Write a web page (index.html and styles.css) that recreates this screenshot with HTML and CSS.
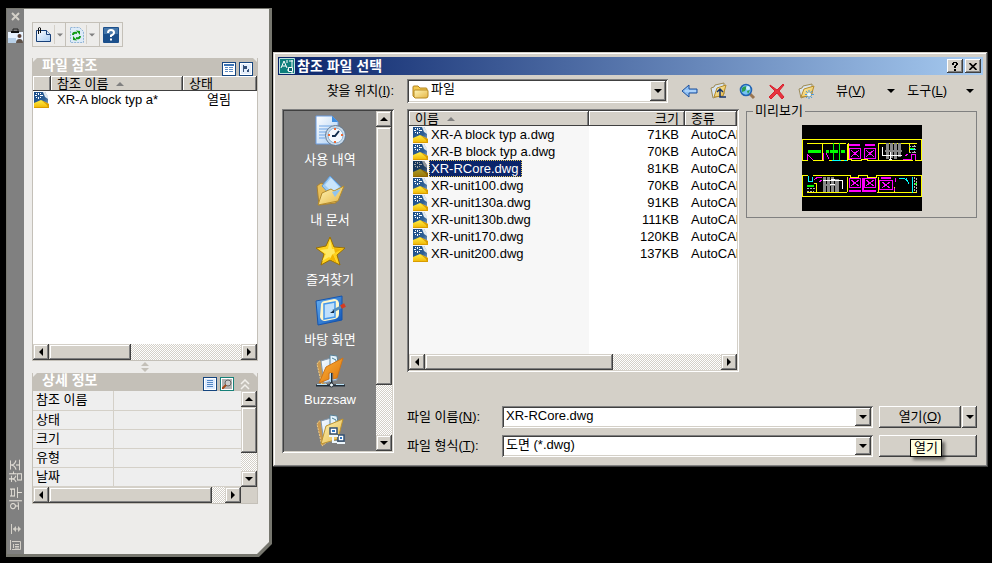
FILE: index.html
```html
<!DOCTYPE html>
<html lang="ko">
<head>
<meta charset="utf-8">
<title>외부 참조</title>
<link rel="stylesheet" href="styles.css">
</head>
<body>
<svg class="sprite" aria-hidden="true">
  <defs>
    <linearGradient id="navy" x1="0" y1="0" x2="1" y2="1"><stop offset="0" stop-color="#174a86"/><stop offset=".6" stop-color="#2f6096"/><stop offset="1" stop-color="#9fb4c8"/></linearGradient>
    <linearGradient id="gold" x1="0" y1="0" x2="0" y2="1"><stop offset="0" stop-color="#fff04a"/><stop offset="1" stop-color="#f0b400"/></linearGradient>
    <linearGradient id="paper" x1="0" y1="0" x2="1" y2="1"><stop offset="0" stop-color="#ffffff"/><stop offset="1" stop-color="#a9cdf3"/></linearGradient>
    <linearGradient id="folder" x1="0" y1="0" x2="1" y2="1"><stop offset="0" stop-color="#fff6b8"/><stop offset="1" stop-color="#e5b545"/></linearGradient>
    <linearGradient id="orange" x1="0" y1="0" x2="1" y2="1"><stop offset="0" stop-color="#ffb43c"/><stop offset="1" stop-color="#dc7208"/></linearGradient>
    <linearGradient id="blue" x1="0" y1="0" x2="1" y2="1"><stop offset="0" stop-color="#6ab4f5"/><stop offset="1" stop-color="#0b51b5"/></linearGradient>
  </defs>
  <symbol id="dwg" viewBox="0 0 16 16">
    <path d="M0 0h11l3 5v11H0z" fill="url(#navy)"/>
    <path d="M9 0h2l3 4v3l-3-2z" fill="#dfe7ee"/>
    <path d="M4 1h1v2H4zM4 5h1v2H4zM1 3h2v1H1zM6 3h3v1H6zM2 1h1v1H2zM6 1h1v1H6zM2 5h1v1H2zM6 5h1v1H6z" fill="#fff"/>
    <path d="M0 11l7-3 8 4v4H0z" fill="url(#gold)"/>
    <path d="M7 8l8 4v4h-1l-1-3z" fill="#d99c00"/>
    <path d="M0 15h15v1H0z" fill="#d99c00"/>
  </symbol>
  <symbol id="up" viewBox="0 0 8 4"><path d="M4 0l4 4H0z"/></symbol>
  <symbol id="down" viewBox="0 0 8 4"><path d="M0 0h8L4 4z"/></symbol>
  <symbol id="left" viewBox="0 0 4 8"><path d="M4 0v8L0 4z"/></symbol>
  <symbol id="right" viewBox="0 0 4 8"><path d="M0 0v8l4-4z"/></symbol>
  <symbol id="files-folder" viewBox="0 0 32 34">
    <path d="M3 10l2-3 5 1 2 21-4 3z" fill="#c9974d" stroke="#f0cc85" stroke-dasharray="2 1"/>
    <path d="M7 7l10-3 5 4 1 18-13 3z" fill="url(#paper)" stroke="#8197ad"/>
    <path d="M16 1l7 1 1 7-8 5z" fill="#e5f2fc" stroke="#5a8297"/>
    <path d="M18 4l4 2v5" fill="none" stroke="#4a8193"/>
  </symbol>
</svg>

<main class="desktop">
  <aside class="palette" aria-label="외부 참조">
    <div class="palette-inner">
      <div class="strip">
        <button class="plain" aria-label="닫기"><svg width="10" height="10" viewBox="0 0 10 10"><path d="M1 1l7 7M8 1L1 8" stroke="#d4d0c8" stroke-width="2"/></svg></button>
        <svg class="strip-pic" width="16" height="16" viewBox="0 0 16 16"><path d="M0 4h15v11H0z" fill="#e9f3ff"/><path d="M0 10h8v5H0z" fill="#b8d0e8"/><path d="M5 4V1h5v3" fill="none" stroke="#222"/><path d="M3 3h8v2H3z" fill="#111"/><circle cx="11.500" cy="8" r="2" fill="#5b3f35"/><path d="M8 15q0-4 3.500-4t3.500 4z" fill="#5e5148"/></svg>
        <span class="strip-title">외부 참조</span>
        <button class="plain" aria-label="자동 숨기기"><svg width="11" height="10" viewBox="0 0 11 10"><path d="M1.500 0v10M3 5h7" stroke="#d4d0c8"/><path d="M6 2v6L3 5zM8 2l3 3-3 3z" fill="#d4d0c8"/></svg></button>
        <button class="plain" aria-label="특성"><svg width="11" height="10" viewBox="0 0 11 10"><path d="M.5 0v10M2 1.500h8.500v8H2M3.500 4v4M5 4.500h4M5 6.500h4M5 8h4" fill="none" stroke="#d4d0c8"/></svg></button>
      </div>
      <div class="palette-content">
        <div class="tools">
          <button class="tool split" aria-label="DWG 부착"><svg width="17" height="16" viewBox="0 0 17 16"><path d="M1.500 3.500h10l4 4v7h-14z" fill="url(#paper)" stroke="#173f78"/><path d="M11.500 3.500v4h4" fill="#dcebfa" stroke="#173f78"/><path d="M3.500 7V1q1-1 2 0v5" fill="none" stroke="#111"/></svg><i></i><svg class="grey" width="6" height="4"><use href="#down"/></svg></button>
          <button class="tool split" aria-label="갱신"><svg width="14" height="16" viewBox="0 0 14 16"><path d="M.5.500h9l4 4v11H.5z" fill="#ddebf8" stroke="#91b5d8" stroke-dasharray="2 1"/><path d="M3 8q0-3 4-2M10 9q0 3-4 2" fill="none" stroke="#119b16" stroke-width="2"/><path d="M6 3.500L10 4v4zM7 13.500L3 13V9z" fill="#119b16"/></svg><i></i><svg class="grey" width="6" height="4"><use href="#down"/></svg></button>
          <button class="tool" aria-label="도움말"><svg width="16" height="16" viewBox="0 0 16 16"><rect width="16" height="16" rx="1" fill="#1b4f8b"/><path d="M1 1h14v6H1z" fill="#4677aa"/><path d="M5 6q0-3 3-3t3 2.500q0 2-3 3V10M8 11.500v2" fill="none" stroke="#fff" stroke-width="2"/></svg></button>
        </div>

        <section class="panel refs">
          <header class="panel-head"><h2>파일 참조</h2>
            <button class="view" aria-label="리스트 뷰"><svg width="10" height="10" viewBox="0 0 10 10" shape-rendering="crispEdges"><path d="M0 0h10v10H0z" fill="#fff"/><path d="M0 0h10v2H0z" fill="#3c73b4"/><path d="M1 3h3v1H1zM5 3h4v1H5zM1 5h3v1H1zM5 5h4v1H5zM1 7h3v1H1zM5 7h4v1H5z" fill="#5b8ac2"/></svg></button>
            <button class="view" aria-label="트리 뷰"><svg width="10" height="10" viewBox="0 0 10 10" shape-rendering="crispEdges"><path d="M0 0h10v10H0z" fill="#e4eefb"/><path d="M2 1h1v7H2zM3 2h3v3H3zM6 6h2v2H6zM7 5h1v1H7z" fill="#345078"/></svg></button>
          </header>
          <div class="ref-list">
            <table>
              <colgroup><col class="c-icon"><col class="c-ref"><col></colgroup>
              <thead><tr><th></th><th>참조 이름 <svg class="sort" width="8" height="4"><use href="#up"/></svg></th><th>상태</th></tr></thead>
              <tbody><tr><td><svg width="16" height="16"><use href="#dwg"/></svg></td><td>XR-A block typ a*</td><td class="state">열림</td></tr></tbody>
            </table>
          </div>
          <div class="hbar"><button aria-label="왼쪽"><svg width="4" height="8"><use href="#left"/></svg></button><span class="thumb t-refs"></span><span class="track"></span><button aria-label="오른쪽"><svg width="4" height="8"><use href="#right"/></svg></button></div>
        </section>

        <div class="splitter"><svg width="8" height="10" viewBox="0 0 8 10"><path d="M4 0l4 4H0zM0 6h8l-4 4z" fill="#c4c0b8"/></svg></div>

        <section class="panel">
          <header class="panel-head"><h2>상세 정보</h2>
            <button class="view" aria-label="상세 정보"><svg width="10" height="10" viewBox="0 0 10 10" shape-rendering="crispEdges"><path d="M0 0h10v10H0z" fill="#dceaff"/><path d="M2 1h6v1H2zM2 3h6v1H2zM2 5h6v1H2zM2 7h6v1H2z" fill="#5487c4"/></svg></button>
            <button class="view teal" aria-label="미리보기"><svg width="10" height="10" viewBox="0 0 10 10"><path d="M0 0h10v10H0z" fill="#b4b4b4"/><circle cx="6" cy="4" r="3" fill="#ccc" stroke="#666"/><path d="M4 6L0 10" stroke="#a34b17" stroke-width="2"/></svg></button>
            <button class="plain chevrons" aria-label="접기"><svg width="10" height="11" viewBox="0 0 10 11"><path d="M1 5l4-4 4 4M1 10l4-4 4 4" fill="none" stroke="#f2f0ec" stroke-width="1.500"/></svg></button>
          </header>
          <div class="detail">
            <table>
              <colgroup><col class="c-key"><col></colgroup>
              <tbody>
                <tr><th>참조 이름</th><td></td></tr>
                <tr><th>상태</th><td></td></tr>
                <tr><th>크기</th><td></td></tr>
                <tr><th>유형</th><td></td></tr>
                <tr><th>날짜</th><td></td></tr>
              </tbody>
            </table>
            <div class="vbar"><button aria-label="위"><svg width="8" height="4"><use href="#up"/></svg></button><span class="thumb t-detail"></span><span class="track"></span><button aria-label="아래"><svg width="8" height="4"><use href="#down"/></svg></button></div>
          </div>
          <div class="hbar with-corner"><button aria-label="왼쪽"><svg width="4" height="8"><use href="#left"/></svg></button><span class="thumb t-keys"></span><span class="track"></span><button aria-label="오른쪽"><svg width="4" height="8"><use href="#right"/></svg></button></div>
        </section>
      </div>
    </div>
  </aside>

  <section class="dialog" role="dialog" aria-labelledby="dlg-title">
    <header class="titlebar">
      <svg width="16" height="16" viewBox="0 0 16 16"><rect width="16" height="16" fill="#0d7f7c"/><path d="M.5.500h15v15H.5z" fill="none" stroke="#bfe3e0"/><path d="M2 10L5 3l3 7M3 8h4M8 2v3M10 3h4M13 2v7M8 12h3M13 14v2" fill="none" stroke="#fff"/><path d="M9.500 9.500h4v4h-4z" fill="#0d5f6c" stroke="#fff"/></svg>
      <h1 id="dlg-title">참조 파일 선택</h1>
      <button class="push cap" aria-label="도움말"><svg width="8" height="9" viewBox="0 0 8 9" shape-rendering="crispEdges"><path d="M2 0h4v1H2zM1 1h2v2H1zM5 1h2v2H5zM4 3h2v1H4zM3 4h2v2H3zM3 7h2v2H3z"/></svg></button>
      <button class="push cap" aria-label="닫기"><svg width="8" height="7" viewBox="0 0 8 7"><path d="M.5 0l7 7M7.500 0l-7 7" stroke="#000" stroke-width="1.600"/></svg></button>
    </header>

    <div class="dialog-body">
      <label class="look-label" for="look">찾을 위치(<u>I</u>):</label>
      <div class="look-row">
        <div class="combo look">
          <svg width="17" height="15" viewBox="0 0 17 15"><path d="M1 12V3q0-1 1-1h4l2 2h6q1 0 1 1v8H2z" fill="#f4c94e" stroke="#b08320"/><path d="M2 13V7q0-1 1-1h12q1 0 1 1v5q0 2-2 2H3z" fill="url(#folder)" stroke="#b88a22"/></svg>
          <select id="look"><option>파일</option></select>
          <span class="push drop"><svg width="8" height="4"><use href="#down"/></svg></span>
        </div>
        <nav class="nav-tools">
          <button class="plain" aria-label="뒤로"><svg width="17" height="16" viewBox="0 0 17 16"><path d="M1 8l7-6v4h8v4H8v4z" fill="#8fc0f3" stroke="#1b4f9c"/><path d="M4 8h11" stroke="#c7e2ff"/></svg></button>
          <button class="plain" aria-label="한 수준 위로"><svg width="17" height="18" viewBox="0 0 17 18"><path d="M1 6l3-1 1-2 9-2v11L3 16z" fill="#d7e4f2" stroke="#9d8b56"/><path d="M4 15L7 6l9-3-3 11z" fill="url(#folder)" stroke="#b58b2b"/><path d="M7 10l3-3 3 3M10 8v7h6" fill="none" stroke="#15336b" stroke-width="1.500"/></svg></button>
          <button class="plain" aria-label="웹 검색"><svg width="17" height="17" viewBox="0 0 17 17"><path d="M10 10l5 5" stroke="#9a7652" stroke-width="3"/><circle cx="7" cy="7" r="5.500" fill="#75c4f4" stroke="#2364b3" stroke-width="1.600"/><path d="M3 5q3-3 5-1l-2 4-3 1zM8 8l3-1-2 4z" fill="#2c9d50"/><circle cx="9" cy="5" r="2" fill="#c9efff"/></svg></button>
          <button class="plain" aria-label="삭제"><svg width="18" height="17" viewBox="0 0 18 17"><path d="M2 2L9 7l6-6 1 1-5 6 5 6-2 2-5-6-6 6-2-2 6-6-5-5z" fill="#e7343f" stroke="#d8222f"/></svg></button>
          <button class="plain" aria-label="새 폴더"><svg width="17" height="17" viewBox="0 0 17 17"><path d="M1 6l3-1 1-2 9-2v10L3 15z" fill="#dbe5ef" stroke="#9d8b56"/><path d="M3 14L6 6l10-3-3 10z" fill="url(#folder)" stroke="#b58b2b"/><path d="M11 7v9M7 11.500h9M8 8l6 7M14 8l-6 7" stroke="#4e9bdd"/><circle cx="11" cy="11.500" r="2" fill="#e9f8ff"/></svg></button>
          <button class="plain menu m-view">뷰(<u>V</u>)<svg width="8" height="4"><use href="#down"/></svg></button>
          <button class="plain menu m-tool">도구(<u>L</u>)<svg width="8" height="4"><use href="#down"/></svg></button>
        </nav>
      </div>

      <div class="places">
        <ul>
          <li><a href="#"><svg width="32" height="34" viewBox="0 0 32 34"><path d="M2 2h16l6 6v22H2z" fill="url(#paper)" stroke="#6b9ce0"/><path d="M18 2v6h6z" fill="#3d8de0"/><path d="M5 12h13M5 15h10M5 18h8M5 21h7M5 24h6" stroke="#6fa5e5"/><circle cx="21.500" cy="21.500" r="10" fill="#cbdcec" stroke="#62788f"/><circle cx="21.500" cy="21.500" r="7.500" fill="#f2f9ff" stroke="#8eb4d3"/><path d="M25 17l-4 5h-3" fill="none" stroke="#112f50" stroke-width="2"/><path d="M21 14v2M21 27v2M14 21h2M27 21h2" stroke="#ed6a36" stroke-width="2"/></svg>사용 내역</a></li>
          <li><a href="#"><svg width="32" height="34" viewBox="0 0 32 34"><path d="M3 12l4-3 7 3 8-1v18L5 31z" fill="#e8bf58" stroke="#a88032"/><path d="M8 12l8-10 12 12-9 10z" fill="#9dcaf2" stroke="#5d9bda"/><path d="M11 11l6-7 8 9-6 6z" fill="#c9e5fb"/><path d="M4 31l4-12 9-4 3 2 10-5-6 15z" fill="url(#folder)" stroke="#b38b2e"/><path d="M18 18l9-3-6 8z" fill="#8fc4f0"/></svg>내 문서</a></li>
          <li><a href="#"><svg width="32" height="34" viewBox="0 0 32 34"><path d="M16 3l4 10 11 1-8 7 3 10-10-5-9 5 3-11-8-6 10-2z" fill="#ffd21e" stroke="#9c7000"/><path d="M16 5l2 10 10 0-9 5 4 8-8-5-7 4 4-7-6-4 8-1z" fill="#ffe963"/><path d="M19 20l4 9-7-4 2-4zM20 14l9 1-8 4z" fill="#f3b400"/></svg>즐겨찾기</a></li>
          <li><a href="#"><svg width="32" height="34" viewBox="0 0 32 34"><path d="M2 7l26-5v24L4 31z" fill="url(#blue)" stroke="#1555ae"/><path d="M7 10q1-3 4-3l9-2q4 0 5 4v11q0 4-4 5l-10 2q-4 0-5-4z" fill="#fff7cb"/><path d="M10 10l11-2v15l-11 2z" fill="#bfe0fc" stroke="#4598eb" stroke-width="1.500"/><path d="M19 17l8-4" stroke="#568fbd" stroke-width="3"/><path d="M27 13l4-2" stroke="#d53b21" stroke-width="4"/><path d="M16 19l4-3v3z" fill="#112b4a"/></svg>바탕 화면</a></li>
          <li><a href="#"><svg width="32" height="34" viewBox="0 0 32 34"><use href="#files-folder" width="32" height="34"/><path d="M5 29l7-16 17-9-6 20-4 1v-6h-4v6z" fill="url(#orange)" stroke="#ce7519"/><path d="M17.500 19v11M2 31.500h29" stroke="#202c38" stroke-width="2"/><path d="M16.500 19v9M3 30.500h10M22 30.500h8" stroke="#b8e1f6"/><circle cx="17.500" cy="31" r="2" fill="#eef7fb" stroke="#26313b"/></svg>Buzzsaw</a></li>
          <li><a href="#" aria-label="FTP"><svg width="32" height="34" viewBox="0 0 32 34"><use href="#files-folder" width="32" height="34"/><path d="M7 30l5-18 17-7-5 20z" fill="url(#folder)" stroke="#bd9331"/><path d="M16 14h7v6h-7zM24 21h6v6h-6z" fill="#fff" stroke="#345273" stroke-width="1.500"/><path d="M18 16h3v2h-3zM26 23h2v2h-2z" fill="#3177c3"/><path d="M15 22h9M23 29h8M19 22v6h4" fill="none" stroke="#edf6fc" stroke-width="2"/></svg></a></li>
        </ul>
        <div class="vbar"><button aria-label="위"><svg width="8" height="4"><use href="#up"/></svg></button><span class="thumb t-places"></span><span class="track"></span><button aria-label="아래"><svg width="8" height="4"><use href="#down"/></svg></button></div>
      </div>

      <div class="work">
        <div class="browse">
          <div class="files">
            <div class="file-scroll">
              <table>
                <colgroup><col class="c-name"><col class="c-size"><col></colgroup>
                <thead><tr><th>이름 <svg class="sort" width="8" height="4"><use href="#up"/></svg></th><th class="num">크기</th><th>종류</th></tr></thead>
                <tbody>
                  <tr><td><span class="file"><svg width="16" height="16"><use href="#dwg"/></svg><span>XR-A block typ a.dwg</span></span></td><td>71KB</td><td>AutoCAD</td></tr>
                  <tr><td><span class="file"><svg width="16" height="16"><use href="#dwg"/></svg><span>XR-B block typ a.dwg</span></span></td><td>70KB</td><td>AutoCAD</td></tr>
                  <tr class="selected"><td><span class="file"><svg width="16" height="16"><use href="#dwg"/></svg><span>XR-RCore.dwg</span></span></td><td>81KB</td><td>AutoCAD</td></tr>
                  <tr><td><span class="file"><svg width="16" height="16"><use href="#dwg"/></svg><span>XR-unit100.dwg</span></span></td><td>70KB</td><td>AutoCAD</td></tr>
                  <tr><td><span class="file"><svg width="16" height="16"><use href="#dwg"/></svg><span>XR-unit130a.dwg</span></span></td><td>91KB</td><td>AutoCAD</td></tr>
                  <tr><td><span class="file"><svg width="16" height="16"><use href="#dwg"/></svg><span>XR-unit130b.dwg</span></span></td><td>111KB</td><td>AutoCAD</td></tr>
                  <tr><td><span class="file"><svg width="16" height="16"><use href="#dwg"/></svg><span>XR-unit170.dwg</span></span></td><td>120KB</td><td>AutoCAD</td></tr>
                  <tr><td><span class="file"><svg width="16" height="16"><use href="#dwg"/></svg><span>XR-unit200.dwg</span></span></td><td>137KB</td><td>AutoCAD</td></tr>
                  <tr class="rest"><td></td><td></td><td></td></tr>
                </tbody>
              </table>
            </div>
            <div class="hbar"><button aria-label="왼쪽"><svg width="4" height="8"><use href="#left"/></svg></button><span class="thumb t-files"></span><span class="track"></span><button aria-label="오른쪽"><svg width="4" height="8"><use href="#right"/></svg></button></div>
          </div>
          <fieldset class="preview">
            <legend>미리보기</legend>
            <svg width="120" height="86" viewBox="0 0 120 86" shape-rendering="crispEdges" fill="none">
              <rect width="120" height="86" fill="#000"/>
              <g stroke="#ff0">
                <path d="M6 35.500H.5v-21h119v21h-7M5 18.500h39M77 18.500h38M20.500 18v17M11 35.500h11M27 35.500h18v-17M46 18v16h3v1.500h10V34h6v1.500h11V18M76 35.500h35M107 18v9"/>
                <path d="M6 50.500H.5v21h119v-21H74V52h-9v-1.500H56V52h-8v-1.500H11M5 67.500h40M75 67.500h40M45 52v15M76 52v15M14.500 67v-9H12M92 67v-5"/>
              </g>
              <g fill="#0f0"><path d="M6 25h13v3H6zM24 25h3v3h-3zM31 18h1v17h-1zM37 18h1v17h-1zM28 25h8v3h-8zM39 25h4v3h-4zM5 60h7v2H5zM108 23h4v1h-4zM112 58h3v2h-3z"/></g>
              <g stroke="#f0f">
                <path d="M47.500 23.500h11v10h-11zM62.500 23.500h11v10h-11zM47.500 53.500h11v9h-11zM62.500 53.500h11v9h-11zM77.500 55.500h13v9h-13z"/>
                <path d="M49 25l8 7M57 25l-8 7M64 25l8 7M72 25l-8 7M49 55l8 6M57 55l-8 6M64 55l8 6M72 55l-8 6M80 57l8 6M88 57l-8 6"/>
                <path d="M47 20h11M63 20h10M47 66h12M62 66h12M79 53h10M60.500 53v14" stroke-width="2"/>
                <path d="M5.500 35v-6M6 30l5 5M21.500 35v-7M24 28l3 6M101 34h8v-5h4v6M103 31l3-2M12 55l4-3h4M17 57l3-2M93 53v4M92 63v3"/>
              </g>
              <g fill="#888"><path d="M84 18h3v16h-3zM88 18h3v15h-3zM92 18h3v16h-3zM96 18h3v14h-3zM83 25h17v2H83zM21 52h3v15h-3zM25 52h3v15h-3zM29 52h3v15h-3zM33 54h4v13h-4zM21 59h15v2H21z"/></g>
              <path d="M80.500 22v8.500H100M88 27v7M87 34h3M21 55.500h19.500V64M29 54h4M28 59h5" stroke="#fff"/>
              <path d="M30 35h9M42 35h3M108 24l6 1M97 53h4l5 3M104 53l3 6M110 52v16M6 51v5h4v-4" stroke="#0ff"/>
              <path d="M107 21h7M107 27h7M112 20v9M112 52v15M114 53v14M5 63h8M5 66h7" stroke="#b6b6b6" stroke-dasharray="2 1"/>
            </svg>
          </fieldset>
        </div>

        <div class="form">
          <label for="fname">파일 이름(<u>N</u>):</label>
          <div class="combo"><input id="fname" type="text" value="XR-RCore.dwg"><button class="push drop" aria-label="목록"><svg width="8" height="4"><use href="#down"/></svg></button></div>
          <div class="open-group"><button class="push open">열기(<u>O</u>)</button><button class="push more" aria-label="열기 옵션"><svg width="8" height="4"><use href="#down"/></svg></button></div>
          <label for="ftype">파일 형식(<u>T</u>):</label>
          <div class="combo"><select id="ftype"><option>도면 (*.dwg)</option></select><span class="push drop"><svg width="8" height="4"><use href="#down"/></svg></span></div>
          <div class="cancel-group"><button class="push cancel" aria-label="취소"></button><span class="tip" role="tooltip">열기</span></div>
        </div>
      </div>
    </div>
  </section>
</main>
</body>
</html>
```
FILE: styles.css
```css
* { box-sizing: border-box; }
:root {
  --face: #d4d0c8;
  --shade: #808080;
  --dark: #404040;
}
body {
  margin: 0;
  background: #000;
  color: #000;
  font: 13px/16px "Liberation Sans", "Noto Sans CJK KR", sans-serif;
}
button, input, select { font: inherit; color: inherit; margin: 0; }
h1, h2, ul { margin: 0; padding: 0; }
svg { display: block; flex: none; }
table { border-collapse: collapse; table-layout: fixed; width: 100%; }
th, td { padding: 0; font-weight: normal; text-align: left; white-space: nowrap; overflow: hidden; }
.sprite { position: absolute; width: 0; height: 0; }

.desktop {
  display: flex;
  align-items: flex-start;
  gap: 1px;
  min-height: 100vh;
  padding: 8px 4px 6px 6px;
}

/* Shared controls */
.plain {
  display: flex;
  align-items: center;
  justify-content: center;
  padding: 0;
  border: 0;
  background: none;
}
.push, .hbar button, .vbar button, .thumb {
  display: flex;
  align-items: center;
  justify-content: center;
  padding: 0;
  border: 0;
  background: var(--face);
  box-shadow: inset -1px -1px var(--dark), inset 1px 1px #fff, inset -2px -2px var(--shade);
}
.hbar button, .vbar button, .thumb {
  box-shadow: inset -1px -1px var(--dark), inset 1px 1px var(--face), inset -2px -2px var(--shade), inset 2px 2px #fff;
}
.hbar, .vbar { display: flex; flex: none; }
.hbar { height: 16px; }
.vbar { flex-direction: column; width: 16px; }
.hbar button, .vbar button { flex: none; width: 16px; height: 16px; }
.thumb { flex: none; }
.track {
  flex: 1;
  background: conic-gradient(#fff 25%, var(--face) 0 50%, #fff 0 75%, var(--face) 0) 0 0 / 2px 2px;
}
.sort { display: inline-block; margin-left: 4px; vertical-align: middle; fill: var(--shade); }
.grey { fill: #808080; }

/* Palette */
.palette {
  flex: 0 0 266px;
  display: flex;
  align-self: stretch;
  padding: 1px 3px 3px 1px;
  background: #77776f;
  clip-path: polygon(0 0, 100% 0, 100% calc(100% - 13px), calc(100% - 13px) 100%, 0 100%);
}
.palette-inner {
  flex: 1;
  display: flex;
  min-width: 0;
  background: #edecea;
  clip-path: polygon(0 0, 100% 0, 100% calc(100% - 12px), calc(100% - 12px) 100%, 0 100%);
}
.strip {
  display: flex;
  flex-direction: column;
  align-items: center;
  gap: 6px;
  width: 17px;
  padding: 3px 0 4px;
  background: var(--shade);
}
.strip .strip-pic { margin-bottom: auto; }
.strip-title {
  padding: 8px 0;
  color: #e4e0d8;
  writing-mode: vertical-rl;
  text-orientation: sideways;
  transform: rotate(180deg);
}
.palette-content { flex: 1; min-width: 0; padding: 13px 11px 0 8px; }
.tools { display: flex; margin-bottom: 11px; }
.tool {
  display: flex;
  align-items: center;
  justify-content: center;
  gap: 3px;
  height: 25px;
  padding: 0 3px;
  border: 1px solid #c4c0b8;
  background: #edecea;
}
.tool + .tool { border-left: 0; }
.tool.split { width: 34px; padding: 0; gap: 2px; }
.tool i { align-self: stretch; border-left: 1px solid var(--face); margin: 2px 0; }

.panel { border: solid #c4c0b8; border-width: 0 1px 1px; }
.panel-head {
  display: flex;
  align-items: flex-end;
  gap: 3px;
  height: 18px;
  margin: 0 -1px;
  padding: 0 5px 0 10px;
  background: #c4c0b8;
  clip-path: polygon(5px 0, calc(100% - 5px) 0, 100% 5px, 100% 100%, 0 100%, 0 5px);
}
.panel-head h2 { flex: 1; align-self: flex-start; color: #fff; font-size: 14px; line-height: 14px; }
.view {
  display: flex;
  align-items: center;
  justify-content: center;
  width: 14px;
  height: 14px;
  padding: 0;
  border: 1px solid #15457f;
  background: #fff;
}
.view.teal { border-color: #168078; }
.chevrons { width: 16px; height: 14px; }
.ref-list { height: 268px; background: #fff; }
.ref-list .c-icon { width: 18px; }
.ref-list .c-ref { width: 132px; }
.ref-list thead th { height: 15px; padding-left: 6px; line-height: 14px; }
.ref-list td { height: 17px; padding-left: 6px; }
.ref-list td:first-child { padding-left: 1px; }
.ref-list td.state { padding-left: 24px; }
thead th { background: var(--face); box-shadow: inset -1px -1px var(--dark), inset 1px 1px #fff, inset -2px 0 var(--shade); }
.t-refs { width: 82px; }
.splitter { display: flex; align-items: center; justify-content: center; height: 12px; }
.detail { display: flex; background: #eee; }
.detail table { flex: 1; width: auto; }
.detail .c-key { width: 80px; }
.detail th, .detail td { height: 19px; border-bottom: 1px solid var(--face); }
.detail th { padding-left: 3px; border-right: 1px solid var(--face); }
.t-detail { height: 46px; }
.t-keys { width: 163px; }
.with-corner { padding-right: 16px; background: var(--face); }

/* Dialog */
.dialog {
  flex: 1;
  min-width: 0;
  margin-top: 44px;
  padding: 5px 5px 4px;
  background: var(--face);
  box-shadow: inset -1px -1px var(--dark), inset 1px 1px var(--face), inset -2px -2px var(--shade), inset 2px 2px #fff;
}
.titlebar {
  display: flex;
  align-items: center;
  height: 18px;
  padding: 0 2px 0 1px;
  background: linear-gradient(90deg, #0a246a, #a6caf0);
}
.titlebar h1 { flex: 1; padding-left: 2px; color: #fff; font-size: 14px; line-height: 18px; }
.cap { width: 16px; height: 14px; }
.cap + .cap { margin-left: 2px; }
.dialog-body {
  display: grid;
  grid-template-columns: 112px minmax(0, 1fr);
  column-gap: 13px;
  row-gap: 6px;
  padding: 4px 6px 6px 4px;
}
.look-label { align-self: center; text-align: right; }
.look-row { display: flex; gap: 13px; }
.combo {
  display: flex;
  align-items: center;
  min-width: 0;
  height: 22px;
  padding: 2px;
  background: #fff;
  box-shadow: inset 1px 1px var(--shade), inset -1px -1px #fff, inset 2px 2px var(--dark), inset -2px -2px var(--face);
}
.combo input, .combo select {
  flex: 1;
  align-self: flex-start;
  min-width: 0;
  height: 16px;
  padding: 0 2px;
  border: 0;
  outline: 0;
  background: none;
  appearance: none;
}
.combo .drop { flex: none; width: 16px; height: 100%; }
.look { flex: 0 1 261px; height: 24px; }
.look svg:first-child { margin-left: 3px; }
.look .drop svg { margin: 0; }
.nav-tools { flex: 1; display: flex; align-items: center; gap: 12px; }
.menu svg { margin-left: 22px; }
.m-view { margin-left: 9px; }
.m-tool svg { margin-left: 19px; }

.places {
  display: flex;
  height: 344px;
  padding: 2px;
  background: var(--shade);
  box-shadow: inset 1px 1px var(--shade), inset -1px -1px #fff, inset 2px 2px var(--dark), inset -2px -2px var(--face);
}
.places ul { flex: 1; overflow: hidden; padding-top: 3px; list-style: none; }
.places li { height: 60px; }
.places a { display: flex; flex-direction: column; align-items: center; color: #fff; text-decoration: none; line-height: 24px; }
.t-places { height: 258px; }

.work { display: flex; flex-direction: column; min-width: 0; }
.browse { display: grid; grid-template-columns: minmax(0, 332fr) minmax(0, 231fr); gap: 7px; margin-bottom: 34px; }
.files {
  padding: 2px;
  background: #fff;
  box-shadow: inset 1px 1px var(--shade), inset -1px -1px #fff, inset 2px 2px var(--dark), inset -2px -2px var(--face);
}
.file-scroll { height: 243px; overflow: hidden; }
.file-scroll table { height: 243px; }
.c-name { width: 180px; }
.c-size { width: 96px; }
.files th { height: 15px; padding-left: 6px; line-height: 14px; }
.files th.num { padding-right: 6px; text-align: right; }
.files td { height: 17px; padding-left: 6px; line-height: 17px; }
.files td:first-child { padding-left: 4px; background: #f7f7f7; }
.files td:nth-child(2) { padding-right: 6px; text-align: right; }
.files tr.rest td { height: auto; }
.file { display: flex; align-items: center; height: 17px; }
.file > span { padding: 0 4px 0 2px; }
.selected .file > span { background: #0a246a; color: #fff; outline: 1px dotted #e5c860; outline-offset: -1px; }
.selected .file svg { filter: brightness(.65); }
.t-files { width: 188px; }
.preview {
  align-self: start;
  display: flex;
  justify-content: center;
  min-width: 0;
  height: 115px;
  margin: -6px 0 0;
  padding: 6px 0 0;
  border: 1px solid var(--shade);
}
.preview legend { margin-left: 6px; padding: 0 2px; }
.form {
  display: grid;
  grid-template-columns: 95px minmax(0, 1fr) 98px;
  align-items: center;
  column-gap: 6px;
  row-gap: 7px;
}
.form label { margin-right: -6px; }
.form .combo { margin-left: -6px; }
.open-group { display: flex; gap: 1px; height: 22px; }
.open { flex: 1; }
.more { width: 15px; }
.cancel-group { position: relative; height: 22px; }
.cancel { width: 100%; height: 100%; }
.tip {
  position: absolute;
  left: 31px;
  top: 4px;
  padding: 0 3px;
  border: 1px solid #000;
  background: #ffffe1;
  box-shadow: 3px 3px 3px rgba(0, 0, 0, .5);
}
```
